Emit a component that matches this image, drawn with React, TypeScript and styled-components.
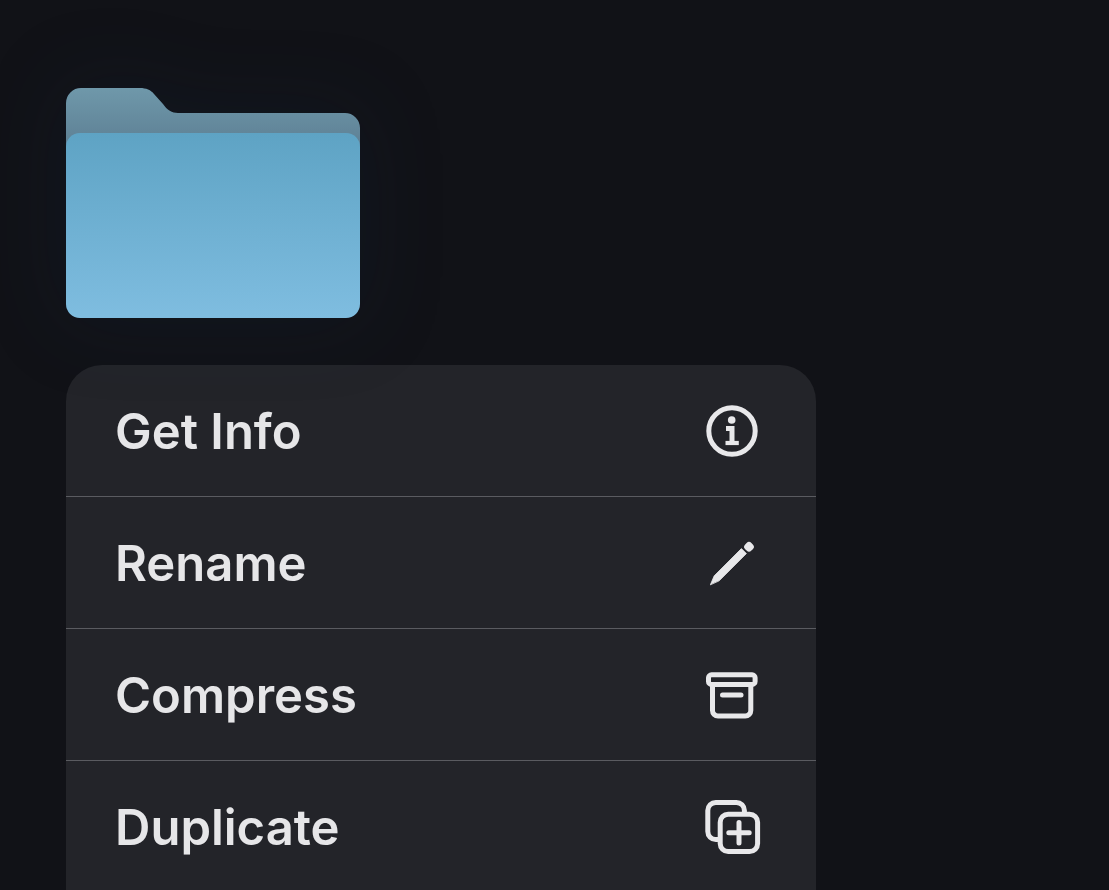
import React from 'react';
import styled, { createGlobalStyle } from 'styled-components';

const Global = createGlobalStyle`
  html, body {
    margin: 0;
    height: 100%;
    overflow: hidden;
    background: #111217;
  }
`;

function InfoIcon() {
  return (
    <S.Icon viewBox="0 0 60 60">
      <circle cx="30" cy="30" r="23.2" strokeWidth="5" />
      <circle cx="29.7" cy="19" r="3.8" fill="#e8e8ea" stroke="none" />
      <path d="M24 27.5H30V42" strokeWidth="5" strokeLinecap="butt" strokeLinejoin="miter" />
      <path d="M23.5 42H36.8" strokeWidth="4.2" strokeLinecap="butt" />
    </S.Icon>
  );
}

function PencilIcon() {
  return (
    <S.Icon viewBox="0 0 60 60">
      <path d="M8.5 51.5 12.2 42.8 39.4 15.6 44.4 20.6 17.4 47.6Z" fill="#e8e8ea" strokeWidth="0.8" />
      <rect x="42.6" y="9.4" width="8.8" height="8.8" rx="3.4" transform="rotate(45 47 13.8)" fill="#e8e8ea" stroke="none" />
    </S.Icon>
  );
}

function ArchiveIcon() {
  return (
    <S.Icon viewBox="0 0 60 60">
      <rect x="6.5" y="9.8" width="46.6" height="9.6" rx="3" strokeWidth="5" />
      <path d="M10.5 20V45.5a5.5 5.5 0 0 0 5.5 5.5H43.3a5.5 5.5 0 0 0 5.5-5.5V20" strokeWidth="5" />
      <path d="M20.5 30H39" strokeWidth="5" />
    </S.Icon>
  );
}

function DuplicateIcon() {
  return (
    <S.Icon viewBox="0 0 60 60">
      <rect x="5.8" y="5.5" width="36.6" height="37" rx="8" strokeWidth="5" />
      <rect x="18.2" y="17.2" width="37.4" height="37.4" rx="8" strokeWidth="5" fill="#232429" />
      <path d="M37 25.5V46M26.8 35.7H47.2" strokeWidth="5" />
    </S.Icon>
  );
}

const ITEMS = [
  { label: 'Get Info', icon: <InfoIcon /> },
  { label: 'Rename', icon: <PencilIcon /> },
  { label: 'Compress', icon: <ArchiveIcon /> },
  { label: 'Duplicate', icon: <DuplicateIcon /> },
];

export default function App() {
  return (
    <S.Page>
      <Global />
      <S.Folder viewBox="0 0 294 230">
        <defs>
          <linearGradient id="folderBack" x1="0" y1="0" x2="0" y2="1">
            <stop offset="0" stopColor="#6f98aa" />
            <stop offset="1" stopColor="#5a7b90" />
          </linearGradient>
          <linearGradient id="folderFront" x1="0" y1="0" x2="0" y2="1">
            <stop offset="0" stopColor="#5ea3c4" />
            <stop offset="1" stopColor="#7fbde0" />
          </linearGradient>
        </defs>
        <path
          d="M0 15a15 15 0 0 1 15-15H74c6 0 11 2 14 6L97 16c4 6 9 9 15 9H279a15 15 0 0 1 15 15V70H0Z"
          fill="url(#folderBack)"
        />
        <rect y="45" width="294" height="185" rx="14" fill="url(#folderFront)" />
      </S.Folder>
      <S.Menu>
        {ITEMS.map(item => (
          <S.Row key={item.label}>
            <S.Label>{item.label}</S.Label>
            {item.icon}
          </S.Row>
        ))}
      </S.Menu>
    </S.Page>
  );
}

const S = {
  Page: styled.div`
    display: flex;
    flex-direction: column;
    align-items: flex-start;
    box-sizing: border-box;
    height: 890px;
    padding: 88px 0 0 66px;
    overflow: hidden;
    background: #111217;
  `,
  Folder: styled.svg`
    display: block;
    width: 294px;
    height: 230px;
    flex: none;
    margin-bottom: 47px;
    filter: drop-shadow(0 0 40px rgba(16, 40, 70, 0.2));
  `,
  Menu: styled.div`
    width: 750px;
    flex: none;
    background: #232429;
    border-radius: 36px 36px 0 0;
  `,
  Row: styled.div`
    display: flex;
    align-items: center;
    justify-content: space-between;
    box-sizing: border-box;
    height: 132px;
    padding: 0 54px 0 49px;
    border-bottom: 1px solid #5a5b60;
  `,
  Label: styled.span`
    padding-top: 2px;
    font-family: Inter, 'Liberation Sans', sans-serif;
    font-size: 49px;
    font-weight: 600;
    color: #e6e6e8;
  `,
  Icon: styled.svg`
    display: block;
    width: 60px;
    height: 60px;
    flex: none;
    fill: none;
    stroke: #e8e8ea;
    stroke-linecap: round;
    stroke-linejoin: round;
  `,
};
